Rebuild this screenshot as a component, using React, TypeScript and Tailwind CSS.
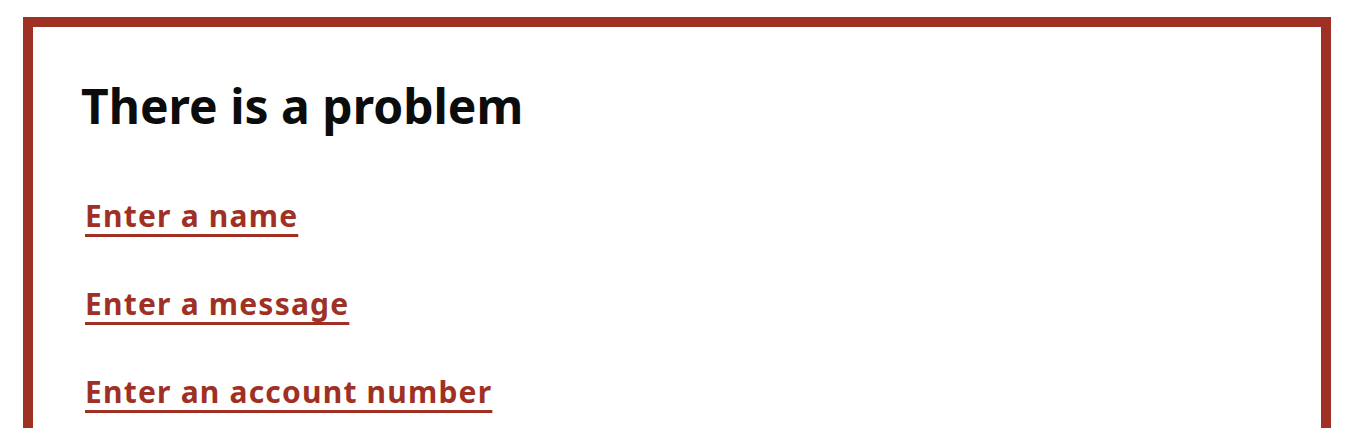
const errors = [
  { id: "name", text: "Enter a name" },
  { id: "message", text: "Enter a message" },
  { id: "account-number", text: "Enter an account number" },
];

const App = () => {
  return (
    <div className="bg-white min-h-screen pl-[23px] pr-[17px] pt-[17px] font-['Noto_Sans',sans-serif]">
      <div className="border-[10px] border-[#9e3123] px-[48px] pt-[49px] pb-[48px]">
        <h2 className="text-[48px] leading-[60px] font-bold text-[#0b0c0c]">
          There is a problem
        </h2>
        <ul className="mt-[61px] ml-[4px] flex flex-col gap-[50px]">
          {errors.map((error) => (
            <li key={error.id} className="text-[30px] leading-[38px]">
              <a
                href={`#${error.id}`}
                className="font-bold tracking-[1.2px] text-[#9e3123] underline decoration-[3px] underline-offset-[7px]"
              >
                {error.text}
              </a>
            </li>
          ))}
        </ul>
      </div>
    </div>
  );
};

export default App;
